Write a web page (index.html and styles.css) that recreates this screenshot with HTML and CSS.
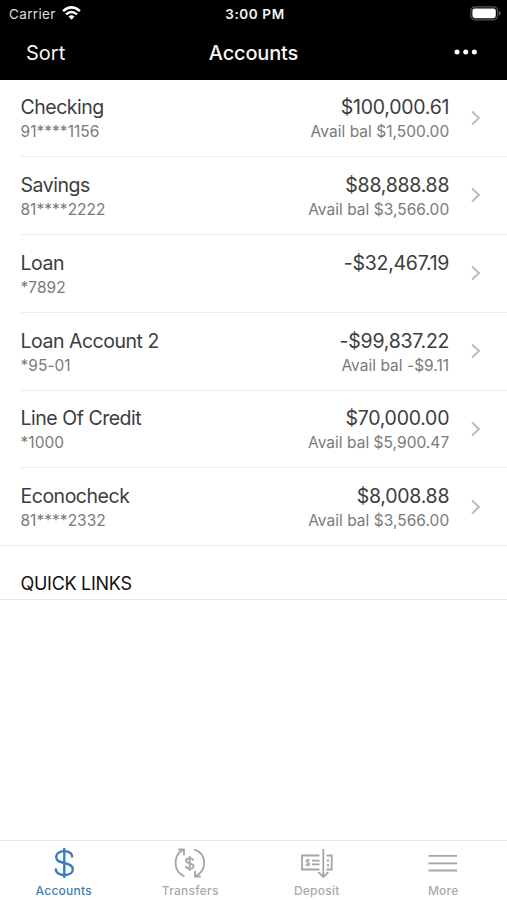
FILE: index.html
```html
<!DOCTYPE html>
<html lang="en">
<head>
<meta charset="utf-8">
<title>Accounts</title>
<link rel="stylesheet" href="styles.css">
</head>
<body>
<header class="header">
  <div class="status">
    <div class="carrier"><span>Carrier</span>
      <svg class="wifi" width="19" height="14" viewBox="0 0 19 14" fill="none" stroke="#fff" stroke-width="2.5"><path d="M1.1 5.1Q9.5-2.3 17.9 5.1"/><path d="M4 8.4Q9.5 3.6 15 8.4"/><path d="M6.5 10.6Q9.5 7.8 12.5 10.6L9.5 13.7Z" fill="#fff" stroke="none"/></svg>
    </div>
    <time class="time">3:00 PM</time>
    <svg class="battery" width="31" height="15" viewBox="0 0 31 15"><rect x=".8" y=".8" width="26.8" height="13" rx="4" fill="none" stroke="#555" stroke-width="1.2"/><rect x="2.4" y="2.4" width="23.4" height="9.8" rx="2.4" fill="#fff"/><path d="M29 5q1.6.6 1.6 2.3T29 9.600Z" fill="#666"/></svg>
  </div>
  <nav class="navbar">
    <span class="sort">Sort</span>
    <h1 class="title">Accounts</h1>
    <svg class="dots" width="24" height="6" viewBox="0 0 24 6" fill="#fff"><circle cx="3" cy="3" r="2.5"/><circle cx="11.700" cy="3" r="2.5"/><circle cx="20.400" cy="3" r="2.5"/></svg>
  </nav>
</header>
<main class="content">
  <ul class="accounts">
    <li class="row"><div class="info"><div class="name">Checking</div><div class="sub">91****1156</div></div><div class="bal"><div class="amount">$100,000.61</div><div class="sub">Avail bal $1,500.00</div></div><svg class="chev" width="10" height="16" viewBox="0 0 10 16"><path d="M1 1.500L8 8L1 14.500"/></svg></li>
    <li class="row"><div class="info"><div class="name">Savings</div><div class="sub">81****2222</div></div><div class="bal"><div class="amount">$88,888.88</div><div class="sub">Avail bal $3,566.00</div></div><svg class="chev" width="10" height="16" viewBox="0 0 10 16"><path d="M1 1.500L8 8L1 14.500"/></svg></li>
    <li class="row"><div class="info"><div class="name">Loan</div><div class="sub">*7892</div></div><div class="bal"><div class="amount">-$32,467.19</div></div><svg class="chev" width="10" height="16" viewBox="0 0 10 16"><path d="M1 1.500L8 8L1 14.500"/></svg></li>
    <li class="row"><div class="info"><div class="name">Loan Account 2</div><div class="sub">*95-01</div></div><div class="bal"><div class="amount">-$99,837.22</div><div class="sub">Avail bal -$9.11</div></div><svg class="chev" width="10" height="16" viewBox="0 0 10 16"><path d="M1 1.500L8 8L1 14.500"/></svg></li>
    <li class="row"><div class="info"><div class="name">Line Of Credit</div><div class="sub">*1000</div></div><div class="bal"><div class="amount">$70,000.00</div><div class="sub">Avail bal $5,900.47</div></div><svg class="chev" width="10" height="16" viewBox="0 0 10 16"><path d="M1 1.500L8 8L1 14.500"/></svg></li>
    <li class="row"><div class="info"><div class="name">Econocheck</div><div class="sub">81****2332</div></div><div class="bal"><div class="amount">$8,008.88</div><div class="sub">Avail bal $3,566.00</div></div><svg class="chev" width="10" height="16" viewBox="0 0 10 16"><path d="M1 1.500L8 8L1 14.500"/></svg></li>
  </ul>
  <h2 class="quick">QUICK LINKS</h2>
</main>
<nav class="tabs">
  <a class="tab active"><svg width="34" height="34" viewBox="0 0 34 34" stroke-width="2.4"><path d="M17.300 2V32"/><path d="M25.300 11.500C25.300 7.300 22 5.200 17.300 5.200S9.200 7.300 9.200 11C9.200 15 12.500 16 17.300 17S25.800 19.500 25.800 23.300S22 29 17.300 29S8.700 27 8.700 22.500"/></svg><span>Accounts</span></a>
  <a class="tab"><svg width="34" height="34" viewBox="0 0 34 34" stroke-width="1.800"><path d="M11.500 30.500C-.5 25 0 9 10.500 3.700M5.300 3.500H11V9.200M21.300 3.300C34 8 34.500 24 22.500 30.300M22 24.800V30.500H27.700"/><path d="M16.700 10V25M20.400 14.700C20.100 12.900 18.700 12.300 16.700 12.300S13 13.200 13 14.800C13 18 20.600 16.500 20.600 20.200C20.600 22 18.700 22.700 16.700 22.700S13 22.100 12.800 20.200"/></svg><span>Transfers</span></a>
  <a class="tab"><svg width="34" height="34" viewBox="0 0 34 34" stroke-width="1.800"><path d="M19.500 9.500H2V23.500H19.500M26.500 9.500H31.700V23.500H26.500M23.300 3V31M18.300 26.200L23.300 31L28.300 26.200"/><path d="M12 14.700H19.500M12 18.300H19.500M28 13.200V15.700M28 18V20.500"/><path d="M9.500 14.700C9 13.300 6 13.500 6 15C6 17 9.600 16 9.600 18C9.600 19.800 6.200 19.800 5.700 18.200M7.800 12.600V20.500" stroke-width="1.200"/></svg><span>Deposit</span></a>
  <a class="tab"><svg width="34" height="34" viewBox="0 0 34 34" stroke-width="1.800"><path d="M2.500 9.800H31M2.500 17.300H31M2.500 24.500H31"/></svg><span>More</span></a>
</nav>
</body>
</html>
```
FILE: styles.css
```css
* { box-sizing: border-box; margin: 0; padding: 0; }
body {
  width: 507px;
  height: 900px;
  display: flex;
  flex-direction: column;
  font-family: Inter, "Liberation Sans", sans-serif;
  background: #fff;
  color: #3d3d3d;
  overflow: hidden;
}
svg { display: block; flex: none; }
.header { height: 80px; background: #000; color: #f5f5f5; flex: none; }
.status {
  height: 27px;
  padding: 0 6px 0 9px;
  display: grid;
  grid-template-columns: 1fr auto 1fr;
  align-items: center;
}
.carrier { display: flex; align-items: center; gap: 6px; font-size: 13.5px; letter-spacing: .35px; color: #ddd; }
.wifi { margin-top: -2px; }
.time { font-size: 13.5px; font-weight: 600; letter-spacing: .6px; }
.battery { justify-self: end; }
.navbar {
  height: 52px;
  padding: 0 28px 0 26px;
  display: grid;
  grid-template-columns: 1fr auto 1fr;
  align-items: center;
}
.sort { font-size: 20px; }
.title { font-size: 20px; font-weight: 500; letter-spacing: -.15px; padding-left: 2px; }
.dots { justify-self: end; margin-right: 1px; margin-top: -2px; }
.content { flex: 1; }
.accounts { list-style: none; border-bottom: 1px solid #ececec; }
.row {
  height: 77.8px;
  margin-left: 20.500px;
  padding: 14.300px 26px 0 0;
  display: flex;
  border-bottom: 1px solid #ececec;
}
.row:first-child { height: 77.200px; }
.row:last-child { border-bottom: 0; height: 76.400px; }
.row + .row { padding-top: 14.800px; }
.info { flex: 1; }
.bal { text-align: right; margin-right: 21.800px; }
.name, .amount { font-size: 19.500px; line-height: 26px; }
.name { letter-spacing: -.48px; }
.amount { letter-spacing: -.26px; }
.sub { font-size: 15.500px; line-height: 23px; letter-spacing: .03px; color: #7a7a7a; }
.chev { margin-top: 15.500px; fill: none; stroke: #bdbdbd; stroke-width: 2; }
.quick {
  height: 54.500px;
  padding: 27px 0 0 20.500px;
  font-size: 18px;
  line-height: 22px;
  font-weight: 400;
  letter-spacing: -.28px;
  color: #111;
  border-bottom: 1px solid #e8e8e8;
}
.tabs { height: 60px; flex: none; border-top: 1px solid #e8e8e8; display: grid; grid-template-columns: repeat(4, 126.500px); padding-left: .5px; }
.tab { display: flex; flex-direction: column; align-items: center; padding-top: 5px; font-size: 12px; font-weight: 500; letter-spacing: .25px; color: #aaa; }
.tab svg { fill: none; stroke: #a5a5a5; }
.tab span { line-height: 16px; margin-top: 3px; }
.active { color: #3f7fba; }
.tab.active svg { stroke: #3c7ebc; }
```
